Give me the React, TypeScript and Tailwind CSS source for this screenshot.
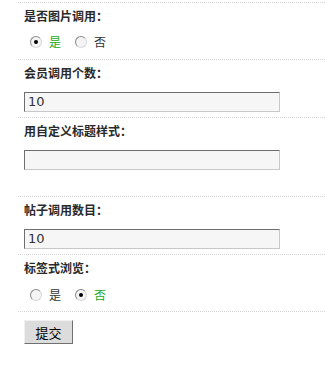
import React from "react";

const font = { fontFamily: '"Noto Sans CJK SC", "Liberation Sans", sans-serif' };

function Radio({ checked, label }: { checked: boolean; label: string }) {
  return (
    <span className="flex items-center">
      <span className="relative w-[12px] h-[12px] rounded-full border border-t-[#8a8a8a] border-l-[#8a8a8a] border-r-[#d8d8d8] border-b-[#d8d8d8] bg-[#f4f4f4] flex items-center justify-center">
        {checked && <span className="w-[4px] h-[4px] rounded-full bg-black" />}
      </span>
      <span className={`ml-[7px] text-[12px] leading-[20px] ${checked ? "text-[#22aa22]" : "text-[#333]"}`}>{label}</span>
    </span>
  );
}

function Label({ children }: { children: React.ReactNode }) {
  return <div className="mt-[3px] h-[20px] leading-[20px] text-[12px] font-bold text-[#2a2a2a] pl-[6px]">{children}</div>;
}

function Input({ value }: { value: string }) {
  return (
    <div className="ml-[6px] mt-[9px] w-[256px] h-[20px] bg-[#f6f6f6] border border-t-[#6e6e6e] border-l-[#6e6e6e] border-r-[#c8c8c8] border-b-[#c8c8c8] flex items-center pl-[3px] text-[13px] text-[#333]" style={{ fontFamily: '"DejaVu Sans", sans-serif' }}>
      {value}
    </div>
  );
}

export default function App() {
  return (
    <div className="w-[325px] h-[368px] bg-white pl-[18px] pt-[2px]" style={font}>
      <div className="border-t border-dotted border-[#d6d6d6]" />
      <div className="border-b border-dotted border-[#d6d6d6]">
        <Label>是否图片调用：</Label>
        <div className="mt-[6px] h-[20px] pl-[12px] flex items-center gap-[14px]">
          <Radio checked label="是" />
          <Radio checked={false} label="否" />
        </div>
        <div className="h-[7px]" />
      </div>
      <div className="border-b border-dotted border-[#d6d6d6]">
        <Label>会员调用个数：</Label>
        <Input value="10" />
        <div className="h-[5px]" />
      </div>
      <div className="border-b border-dotted border-[#d6d6d6]">
        <Label>用自定义标题样式：</Label>
        <Input value="" />
        <div className="h-[26px]" />
      </div>
      <div className="border-b border-dotted border-[#d6d6d6]">
        <Label>帖子调用数目：</Label>
        <Input value="10" />
        <div className="h-[5px]" />
      </div>
      <div className="border-b border-dotted border-[#d6d6d6]">
        <Label>标签式浏览：</Label>
        <div className="mt-[7px] h-[20px] pl-[12px] flex items-center gap-[14px]">
          <Radio checked={false} label="是" />
          <Radio checked label="否" />
        </div>
        <div className="h-[6px]" />
      </div>
      <button className="ml-[6px] mt-[8px] w-[49px] h-[24px] bg-[#dcdcdc] border border-t-[#f0f0f0] border-l-[#f0f0f0] border-r-[#707070] border-b-[#707070] text-[13px] text-black leading-none">
        提交
      </button>
    </div>
  );
}
